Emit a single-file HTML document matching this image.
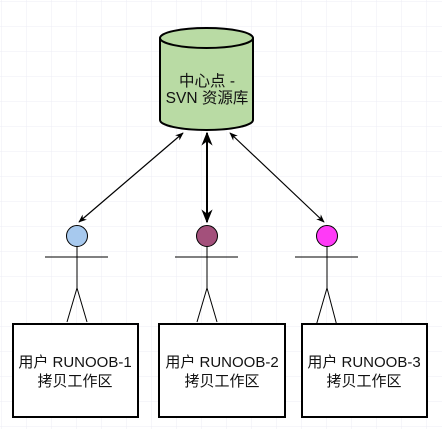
<!DOCTYPE html>
<html><head><meta charset="utf-8"><style>
html,body{margin:0;padding:0;background:#fff}
svg{display:block}
text{font-family:"Liberation Sans","Noto Sans CJK SC",sans-serif;fill:#111}
</style></head><body>
<svg width="442" height="429" viewBox="0 0 442 429" xmlns="http://www.w3.org/2000/svg">
<defs>
<pattern id="g" width="25" height="25" patternUnits="userSpaceOnUse" x="2" y="2">
<path d="M25 0V25M0 25H25" fill="none" stroke="#ececf6" stroke-width="1"/>
</pattern>
<marker id="a" viewBox="0 0 10 10" refX="9" refY="5" markerWidth="7" markerHeight="7" orient="auto-start-reverse">
<path d="M0 1L10 5L0 9L3 5Z" fill="#000"/>
</marker>
</defs>
<rect width="442" height="429" fill="url(#g)"/>
<path d="M160 38 A46.5 10 0 0 1 253 38 V120 A46.5 10 0 0 1 160 120 Z" fill="#b9dba4" stroke="#000" stroke-width="2"/>
<path d="M160 38 A46.5 10 0 0 0 253 38" fill="none" stroke="#000" stroke-width="2"/>
<text x="207" y="86" font-size="15.5" text-anchor="middle">中心点 -</text>
<text x="207" y="103" font-size="15.5" text-anchor="middle">SVN 资源库</text>
<line x1="183" y1="133" x2="79" y2="222" stroke="#000" stroke-width="1.2" marker-start="url(#a)" marker-end="url(#a)"/>
<line x1="207" y1="133" x2="207" y2="222" stroke="#000" stroke-width="2" marker-start="url(#a)" marker-end="url(#a)"/>
<line x1="230" y1="133" x2="324" y2="222" stroke="#000" stroke-width="1.2" marker-start="url(#a)" marker-end="url(#a)"/>
<g stroke="#000" stroke-width="1" fill="none">
<circle cx="77" cy="236" r="10.5" fill="#a7c9ee"/>
<path d="M77 246.5V288M45 257H108M67 322L77 288L87 322"/>
<circle cx="207" cy="236" r="10.5" fill="#a3507b"/>
<path d="M207 246.5V288M175 257H238M197 322L207 288L217 322"/>
<circle cx="327" cy="236" r="10.5" fill="#ff3af7"/>
<path d="M327 246.5V288M295 257H358M316 326L327 288L337 326"/>
</g>
<g fill="#fff" stroke="#000" stroke-width="2">
<rect x="13" y="324" width="125" height="93"/>
<rect x="159" y="324" width="126" height="93"/>
<rect x="302" y="324" width="125" height="93"/>
</g>
<g font-size="15" text-anchor="middle">
<text x="75" y="367">用户 RUNOOB-1</text>
<text x="75" y="386">拷贝工作区</text>
<text x="222" y="367">用户 RUNOOB-2</text>
<text x="222" y="386">拷贝工作区</text>
<text x="364" y="367">用户 RUNOOB-3</text>
<text x="364" y="386">拷贝工作区</text>
</g>
</svg>
</body></html>
